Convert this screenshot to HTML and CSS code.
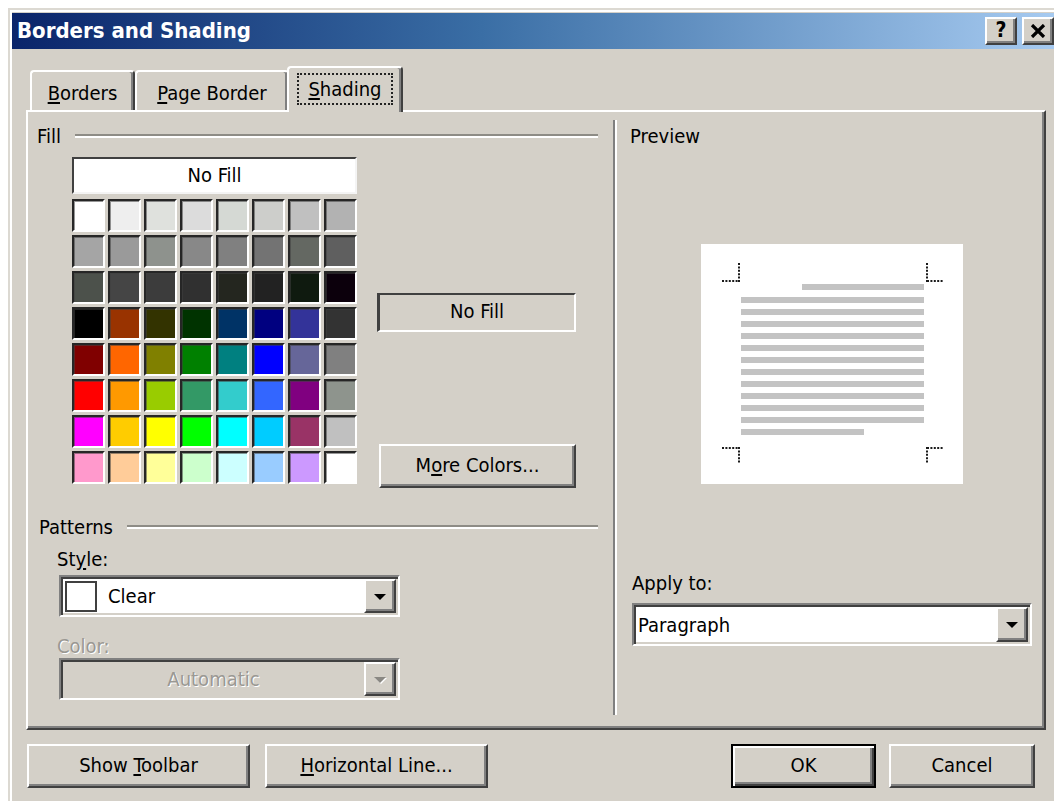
FILE: index.html
```html
<!DOCTYPE html>
<html lang="en">
<head>
<meta charset="utf-8">
<title>Borders and Shading</title>
<link rel="stylesheet" href="styles.css">
</head>
<body>
<div class="window">
  <div class="titlebar">
    <span class="title">Borders and Shading</span>
    <div class="caption-btns">
      <div class="cap-btn help">?</div>
      <div class="cap-btn">
        <svg width="16" height="14" viewBox="0 0 16 14"><path d="M2 1 L14 13 M14 1 L2 13" stroke="#000" stroke-width="3.2" fill="none"/></svg>
      </div>
    </div>
  </div>

  <div class="dialog">
    <div class="tabs">
      <div class="tab tab-borders"><u>B</u>orders</div>
      <div class="tab tab-page"><u>P</u>age Border</div>
      <div class="tab tab-shading active"><span class="focus"><u>S</u>hading</span></div>
    </div>

    <div class="panel">
      <div class="col-left">
        <div class="group-head"><span class="group-label">Fill</span><span class="etch"></span></div>

        <div class="fill-area">
          <div class="palette">
            <div class="nofill">No Fill</div>
            <div class="swatches">
              <span class="sw" style="background:#ffffff"></span>
              <span class="sw" style="background:#eeeeee"></span>
              <span class="sw" style="background:#dfe1dd"></span>
              <span class="sw" style="background:#dcdcdc"></span>
              <span class="sw" style="background:#d5d9d4"></span>
              <span class="sw" style="background:#cdcecb"></span>
              <span class="sw" style="background:#c0c0c0"></span>
              <span class="sw" style="background:#b2b2b2"></span>

              <span class="sw" style="background:#a5a5a5"></span>
              <span class="sw" style="background:#9a9a9a"></span>
              <span class="sw" style="background:#8e928d"></span>
              <span class="sw" style="background:#888888"></span>
              <span class="sw" style="background:#808080"></span>
              <span class="sw" style="background:#737373"></span>
              <span class="sw" style="background:#646862"></span>
              <span class="sw" style="background:#5f5f5f"></span>

              <span class="sw" style="background:#4c514b"></span>
              <span class="sw" style="background:#454545"></span>
              <span class="sw" style="background:#3c3c3c"></span>
              <span class="sw" style="background:#303030"></span>
              <span class="sw" style="background:#24261f"></span>
              <span class="sw" style="background:#222222"></span>
              <span class="sw" style="background:#0f1a0f"></span>
              <span class="sw" style="background:#0c000c"></span>

              <span class="sw" style="background:#000000"></span>
              <span class="sw" style="background:#993300"></span>
              <span class="sw" style="background:#333300"></span>
              <span class="sw" style="background:#003300"></span>
              <span class="sw" style="background:#003366"></span>
              <span class="sw" style="background:#000080"></span>
              <span class="sw" style="background:#333399"></span>
              <span class="sw" style="background:#333333"></span>

              <span class="sw" style="background:#800000"></span>
              <span class="sw" style="background:#ff6600"></span>
              <span class="sw" style="background:#808000"></span>
              <span class="sw" style="background:#008000"></span>
              <span class="sw" style="background:#008080"></span>
              <span class="sw" style="background:#0000ff"></span>
              <span class="sw" style="background:#666699"></span>
              <span class="sw" style="background:#808080"></span>

              <span class="sw" style="background:#ff0000"></span>
              <span class="sw" style="background:#ff9900"></span>
              <span class="sw" style="background:#99cc00"></span>
              <span class="sw" style="background:#339966"></span>
              <span class="sw" style="background:#33cccc"></span>
              <span class="sw" style="background:#3366ff"></span>
              <span class="sw" style="background:#800080"></span>
              <span class="sw" style="background:#8e948d"></span>

              <span class="sw" style="background:#ff00ff"></span>
              <span class="sw" style="background:#ffcc00"></span>
              <span class="sw" style="background:#ffff00"></span>
              <span class="sw" style="background:#00ff00"></span>
              <span class="sw" style="background:#00ffff"></span>
              <span class="sw" style="background:#00ccff"></span>
              <span class="sw" style="background:#993366"></span>
              <span class="sw" style="background:#c0c0c0"></span>

              <span class="sw" style="background:#ff99cc"></span>
              <span class="sw" style="background:#ffcc99"></span>
              <span class="sw" style="background:#ffff99"></span>
              <span class="sw" style="background:#ccffcc"></span>
              <span class="sw" style="background:#ccffff"></span>
              <span class="sw" style="background:#99ccff"></span>
              <span class="sw" style="background:#cc99ff"></span>
              <span class="sw" style="background:#ffffff"></span>
            </div>
          </div>

          <div class="fill-side">
            <div class="current-fill">No Fill</div>
            <div class="btn more-colors">M<u>o</u>re Colors...</div>
          </div>
        </div>

        <div class="group-head patterns-head"><span class="group-label">Patterns</span><span class="etch"></span></div>

        <div class="field-label style-label">St<u>y</u>le:</div>
        <div class="combo">
          <span class="pattern-chip"></span>
          <span class="combo-text">Clear</span>
          <span class="drop-btn"><span class="arrow"></span></span>
        </div>

        <div class="field-label disabled color-label">Color:</div>
        <div class="combo combo-disabled">
          <span class="combo-text centered">Automatic</span>
          <span class="drop-btn"><span class="arrow"></span></span>
        </div>
      </div>

      <div class="divider"></div>

      <div class="col-right">
        <div class="group-label preview-label">Preview</div>
        <div class="preview">
          <svg width="262" height="240" viewBox="0 0 262 240">
            <g stroke="#1a1a1a" stroke-width="2" stroke-dasharray="2 1.4" fill="none">
              <path d="M21 37 H38 M38 19 V38"/>
              <path d="M226 19 V38 M226 37 H243"/>
              <path d="M21 204 H38 M38 203 V220"/>
              <path d="M226 203 V220 M226 204 H243"/>
            </g>
            <g fill="#c3c3c3">
              <rect x="101" y="40" width="122" height="6"/>
              <rect x="40" y="53" width="183" height="6"/>
              <rect x="40" y="65" width="183" height="6"/>
              <rect x="40" y="77" width="183" height="6"/>
              <rect x="40" y="89" width="183" height="6"/>
              <rect x="40" y="101" width="183" height="6"/>
              <rect x="40" y="113" width="183" height="6"/>
              <rect x="40" y="125" width="183" height="6"/>
              <rect x="40" y="137" width="183" height="6"/>
              <rect x="40" y="149" width="183" height="6"/>
              <rect x="40" y="161" width="183" height="6"/>
              <rect x="40" y="173" width="183" height="6"/>
              <rect x="40" y="185" width="123" height="6"/>
            </g>
          </svg>
        </div>

        <div class="field-label apply-label">Apply to:</div>
        <div class="combo combo-apply">
          <span class="combo-text">Paragraph</span>
          <span class="drop-btn"><span class="arrow"></span></span>
        </div>
      </div>
    </div>

    <div class="footer">
      <div class="btn btn-wide">Show <u>T</u>oolbar</div>
      <div class="btn btn-wide"><u>H</u>orizontal Line...</div>
      <div class="spacer"></div>
      <div class="btn btn-ok">OK</div>
      <div class="btn btn-cancel">Cancel</div>
    </div>
  </div>
</div>
</body>
</html>
```

FILE: styles.css
```css
html, body {
  margin: 0;
  padding: 0;
  background: #ffffff;
  overflow: hidden;
}

body {
  font-family: "DejaVu Sans Condensed", "DejaVu Sans", sans-serif;
  font-stretch: condensed;
  font-size: 20px;
  line-height: 24px;
  color: #000;
}

u { text-decoration-thickness: 2px; text-underline-offset: 2px; }

/* outer window frame */
.window {
  box-sizing: border-box;
  margin: 8px 0 0 8px;
  width: 1046px;
  height: 800px;
  background: #d4d0c8;
  border-top: 2px solid #dcd9d2;
  border-left: 2px solid #dcd9d2;
  padding: 3px 0 0 2px;
  box-shadow: inset 2px 2px 0 #ffffff;
}

/* caption */
.titlebar {
  height: 36px;
  display: flex;
  align-items: center;
  justify-content: space-between;
  background: linear-gradient(to right, #0a246a 0%, #3a6ea5 45%, #a6caf0 100%);
  padding-left: 5px;
}

.title {
  color: #fff;
  font-weight: bold;
  font-size: 22px;
  line-height: 26px;
  margin-top: -1px;
}

.caption-btns {
  display: flex;
  gap: 5px;
}

.cap-btn {
  box-sizing: border-box;
  width: 32px;
  height: 28px;
  background: #d4d0c8;
  border-top: 2px solid #fff;
  border-left: 2px solid #fff;
  border-right: 2px solid #404040;
  border-bottom: 2px solid #404040;
  box-shadow: inset -2px -2px 0 #808080;
  display: flex;
  align-items: center;
  justify-content: center;
}

.cap-btn.help {
  font-family: "DejaVu Sans", sans-serif;
  font-weight: bold;
  font-size: 21px;
  line-height: 22px;
  padding-bottom: 2px;
}

/* dialog body */
.dialog {
  padding: 17px 8px 0 14px;
}

.tabs {
  display: flex;
  align-items: flex-end;
  height: 44px;
  padding-left: 4px;
  position: relative;
  z-index: 1;
}

.tab {
  box-sizing: border-box;
  height: 40px;
  padding-top: 9px;
  text-align: center;
  border-top: 2px solid #fff;
  border-left: 2px solid #fff;
  border-right: 2px solid #404040;
  border-radius: 4px 4px 0 0;
  box-shadow: inset -2px 0 0 #808080;
  background: #d4d0c8;
}

.tab-borders { width: 105px; }
.tab-page { width: 154px; }

.tab.active {
  width: 116px;
  height: 46px;
  margin: 0 -2px -2px -2px;
  padding-top: 5px;
  position: relative;
}

.focus {
  display: inline-block;
  border: 2px dotted #222;
  padding: 2px 9px;
}

/* tab page */
.panel {
  box-sizing: border-box;
  height: 620px;
  display: flex;
  border-top: 2px solid #fff;
  border-left: 2px solid #fff;
  border-right: 2px solid #404040;
  border-bottom: 2px solid #404040;
  box-shadow: inset -2px -2px 0 #808080;
}

.col-left {
  width: 585px;
  padding-top: 12px;
}

.divider {
  width: 2px;
  border-right: 2px solid #fff;
  background: #808080;
  margin: 8px 0 13px;
}

.col-right {
  flex: 1;
  padding-top: 12px;
  padding-left: 12px;
}

.group-head {
  display: flex;
  align-items: center;
  margin-left: 9px;
  margin-right: 15px;
}

.etch {
  flex: 1;
  margin-left: 14px;
  border-top: 2px solid #8e8c86;
  border-bottom: 2px solid #fff;
}

.fill-area {
  display: flex;
  margin-top: 9px;
  margin-left: 44px;
}

.palette { width: 285px; }

.nofill {
  box-sizing: border-box;
  height: 37px;
  background: #fff;
  border-top: 2px solid #404040;
  border-left: 2px solid #404040;
  border-right: 2px solid #f4f4f4;
  border-bottom: 2px solid #f4f4f4;
  text-align: center;
  line-height: 33px;
}

.swatches {
  margin-top: 5px;
  display: grid;
  grid-template-columns: repeat(8, 33px);
  grid-auto-rows: 33px;
  gap: 3px;
}

.sw {
  box-sizing: border-box;
  border-top: 2px solid #262626;
  border-left: 2px solid #262626;
  border-right: 2px solid #fff;
  border-bottom: 2px solid #fff;
  box-shadow: inset 1px 1px 0 rgba(64, 64, 64, 0.55);
}

.fill-side {
  margin-left: 20px;
  padding-top: 136px;
  width: 199px;
}

.current-fill {
  box-sizing: border-box;
  height: 39px;
  border-top: 2px solid #404040;
  border-left: 3px solid #404040;
  border-right: 2px solid #fff;
  border-bottom: 2px solid #fff;
  text-align: center;
  line-height: 33px;
}

.btn {
  box-sizing: border-box;
  height: 44px;
  background: #d4d0c8;
  border-top: 2px solid #fff;
  border-left: 2px solid #fff;
  border-right: 2px solid #404040;
  border-bottom: 2px solid #404040;
  box-shadow: inset -2px -2px 0 #808080;
  text-align: center;
  line-height: 38px;
}

.more-colors {
  margin-top: 112px;
  margin-left: 2px;
  width: 197px;
}

.patterns-head {
  margin-top: 27px;
  margin-left: 11px;
}

.field-label { margin-left: 29px; }
.style-label { margin-top: 8px; }
.color-label { margin-top: 17px; }

.field-label.disabled,
.combo-disabled .combo-text {
  color: #9a9893;
  text-shadow: 1px 1px 0 #fff;
}

.combo {
  box-sizing: border-box;
  display: flex;
  align-items: center;
  width: 341px;
  height: 42px;
  margin-left: 31px;
  margin-top: 4px;
  padding: 2px;
  background: #fff;
  border-top: 2px solid #808080;
  border-left: 2px solid #808080;
  border-right: 2px solid #fff;
  border-bottom: 2px solid #fff;
  box-shadow: inset 2px 2px 0 #404040, inset -2px -2px 0 #d4d0c8;
}

.combo-disabled {
  margin-top: 0;
  background: #d4d0c8;
}

.pattern-chip {
  box-sizing: border-box;
  width: 32px;
  height: 31px;
  margin-left: 2px;
  border: 2px solid #404040;
  background: #fff;
}

.combo-text {
  flex: 1;
  padding-left: 11px;
}

.combo-text.centered {
  text-align: center;
  padding-left: 0;
}

.drop-btn {
  box-sizing: border-box;
  width: 32px;
  height: 34px;
  background: #d4d0c8;
  border-top: 2px solid #fff;
  border-left: 2px solid #fff;
  border-right: 2px solid #404040;
  border-bottom: 2px solid #404040;
  box-shadow: inset -2px -2px 0 #808080;
  display: flex;
  align-items: center;
  justify-content: center;
}

.arrow {
  width: 0;
  height: 0;
  border-left: 6px solid transparent;
  border-right: 6px solid transparent;
  border-top: 6px solid #000;
  margin-top: 1px;
}

.combo-disabled .arrow {
  border-top-color: #8a8883;
  filter: drop-shadow(1px 1px 0 #fff);
}

.preview-label { margin-left: 1px; }

.preview {
  width: 262px;
  height: 240px;
  margin-top: 96px;
  margin-left: 72px;
  background: #fff;
}

.preview svg { display: block; }

.apply-label {
  margin-top: 87px;
  margin-left: 3px;
}

.combo-apply {
  width: 400px;
  height: 43px;
  margin-left: 3px;
  margin-top: 8px;
}

.combo-apply .combo-text { padding-left: 2px; }

.combo-apply .drop-btn { height: 35px; }

/* command buttons */
.footer {
  display: flex;
  margin-top: 14px;
  padding-left: 1px;
  padding-right: 11px;
}

.btn-wide { width: 223px; margin-right: 15px; }

.spacer { flex: 1; }

.btn-ok {
  width: 145px;
  margin-right: 13px;
  border: 2px solid #000;
  box-shadow: inset 2px 2px 0 #fff, inset -2px -2px 0 #404040, inset -4px -4px 0 #808080;
}

.btn-cancel { width: 146px; }
```
